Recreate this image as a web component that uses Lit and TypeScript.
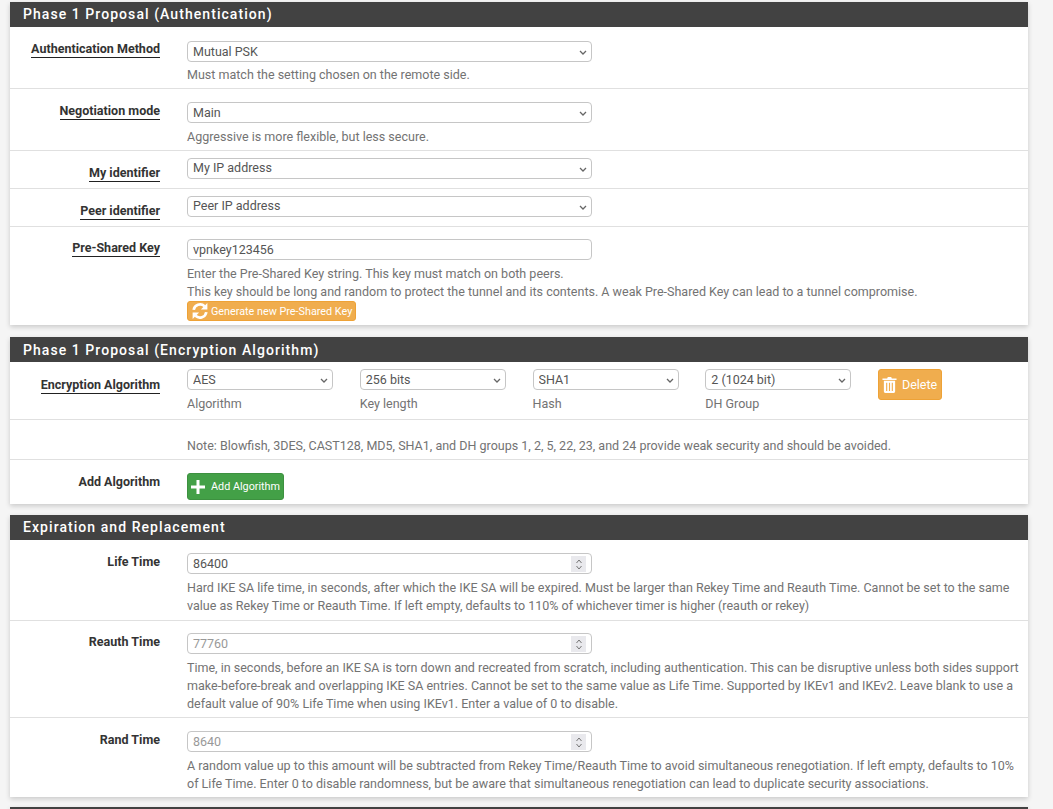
import { LitElement, html, css } from 'lit';
import { customElement } from 'lit/decorators.js';

const refreshIcon = html`<svg class="icon" viewBox="0 0 20 20" width="18" height="18">
  <path d="M3 8.800A7.200 7.200 0 0 1 15 4.600" fill="none" stroke="#fff" stroke-width="3" />
  <path d="M18.200 1.200v7.200h-7.200z" fill="#fff" />
  <path d="M17 11.200A7.200 7.200 0 0 1 5 15.400" fill="none" stroke="#fff" stroke-width="3" />
  <path d="M1.800 18.800v-7.200h7.200z" fill="#fff" />
</svg>`;

const trashIcon = html`<svg class="icon" viewBox="0 0 16 18" width="15" height="17">
  <path d="M5.500 2.600 6.200 1h3.600l.7 1.600H15.500v1.600H.5V2.600z" fill="#fff" />
  <path fill-rule="evenodd" fill="#fff" d="M2 5h12v11.200c0 1-.6 1.800-1.500 1.800h-9C2.600 18 2 17.200 2 16.200zM4.400 7v9h1.200V7zM7.400 7v9h1.200V7zM10.400 7v9h1.200V7z" />
</svg>`;

const plusIcon = html`<svg class="icon" viewBox="0 0 14 14" width="14" height="14">
  <path d="M5.500 0h3v5.500H14v3H8.500V14h-3V8.500H0v-3h5.500z" fill="#fff" />
</svg>`;

// native arrow is too heavy, so the select gets its own chevron on top
const selectBox = (text: string, cls = '') => html`<div class="select-box ${cls}">
  <select><option>${text}</option></select>
  <svg class="chevron" viewBox="0 0 8 5" width="8" height="5">
    <path d="M1 1l3 3 3-3" fill="none" stroke="#666" stroke-width="1.300" />
  </svg>
</div>`;

const numberBox = (value: string, placeholder = '') => html`<div class="number-box">
  <input type="number" .value=${value} placeholder=${placeholder} />
  <span class="spin">
    <svg viewBox="0 0 8 13" width="8" height="13">
      <path d="M1.500 5l2.500-3 2.500 3M1.500 8l2.500 3 2.500-3" fill="none" stroke="#757575" stroke-width="1" />
    </svg>
  </span>
</div>`;

@customElement('app-root')
export class AppRoot extends LitElement {
  static styles = css`
    :host {
      display: block;
      height: 809px;
      overflow: hidden;
      background: #f5f5f5;
      font-family: Roboto, 'Liberation Sans', sans-serif;
      font-size: 12.52px;
      color: #212121;
    }
    .page {
      padding: 2px 25px 0 10px;
    }
    .panel {
      background: #fff;
      margin-bottom: 12px;
      box-shadow: 0 2px 5px rgba(0, 0, 0, 0.18);
    }
    .panel.short {
      margin-bottom: 11px;
    }
    .panel.last {
      margin-bottom: 10px;
    }
    h2 {
      margin: 0;
      height: 25px;
      padding-left: 13px;
      background: #424242;
      color: #fff;
      font-size: 14px;
      font-weight: 500;
      line-height: 25px;
      letter-spacing: 1.06px;
    }
    .panel.short h2 {
      line-height: 26px;
    }
    .row {
      display: grid;
      box-sizing: border-box;
      grid-template-columns: 150px 1fr;
      column-gap: 27px;
      border-bottom: 1px solid #e0e0e0;
    }
    .row:last-child {
      border-bottom: none;
    }
    .label {
      justify-self: end;
      font-weight: 700;
      line-height: 14px;
      height: 14px;
      color: #333;
    }
    .label.link {
      height: 15px;
      border-bottom: 1px solid #212121;
    }
    .select-box,
    .number-box {
      position: relative;
      width: 405px;
    }
    .chevron {
      position: absolute;
      top: 9px;
      right: 5px;
      pointer-events: none;
    }
    .spin {
      position: absolute;
      top: 3px;
      right: 6px;
      display: flex;
      align-items: center;
      justify-content: center;
      width: 15px;
      height: 16px;
      background: #e9e9ed;
    }
    select,
    input {
      display: block;
      box-sizing: border-box;
      width: 100%;
      height: 21px;
      margin: 0;
      padding: 0 0 0 5px;
      background: #fff;
      border: 1px solid #c6c6c6;
      border-radius: 4px;
      color: #555;
      font-family: inherit;
      font-size: 12.5px;
    }
    select {
      appearance: none;
    }
    .raised select {
      padding-bottom: 3px;
    }
    input[type='number'] {
      appearance: textfield;
    }
    input::placeholder {
      color: #999;
    }
    input::-webkit-inner-spin-button {
      display: none;
    }
    .help {
      color: #737373;
      line-height: 18px;
    }
    .btn {
      display: inline-flex;
      align-items: center;
      box-sizing: border-box;
      border: 1px solid transparent;
      border-radius: 3px;
      padding: 0;
      color: #fff;
      font-family: inherit;
      font-size: 10.800px;
    }
    .icon {
      flex: none;
    }
    .warn {
      background: #f0ad4e;
      border-color: #eea236;
    }
    .ok {
      background: #43a047;
      border-color: #3d9140;
    }
    .generate {
      width: 169px;
      height: 20px;
      padding-left: 3px;
      gap: 2px;
    }
    .add {
      width: 97px;
      height: 27px;
      padding-left: 3px;
      gap: 6px;
    }
    .delete {
      width: 64px;
      height: 31px;
      padding-left: 3px;
      gap: 5px;
      font-size: 12.5px;
    }
    .auth {
      height: 62px;
      padding-top: 14px;
    }
    .auth .label {
      margin-top: 1px;
    }
    .auth .help {
      margin-top: 4px;
    }
    .auth.second {
      padding-top: 13px;
    }
    .auth.second .label {
      margin-top: 2px;
    }
    .auth.second .help {
      margin-top: 5px;
    }
    .ident {
      height: 38px;
      padding-top: 7px;
    }
    .ident .label {
      margin-top: 8px;
    }
    .key {
      padding: 12px 0 4px;
    }
    .key .label {
      margin-top: 2px;
    }
    .key .help {
      margin-top: 5px;
    }
    .key .btn {
      display: flex;
    }
    .algos {
      height: 58px;
      padding-top: 7px;
    }
    .algo-row {
      display: flex;
      align-items: flex-start;
      gap: 26.750px;
    }
    .algo-row .select-box {
      width: 146px;
    }
    .algo-row .help {
      margin-top: 5px;
    }
    .algos .label {
      margin-top: 9px;
    }
    .note {
      height: 40px;
      align-items: end;
    }
    .note .help {
      padding-bottom: 4px;
    }
    .add-row {
      padding: 13px 0 4px;
    }
    .add-row .label {
      margin-top: 2px;
    }
    .life {
      padding-top: 13px;
      padding-bottom: 5px;
    }
    .life .help {
      margin-top: 5px;
      max-width: 834px;
    }
    .life .label {
      margin-top: 2px;
    }
    .reauth {
      padding-top: 12px;
      padding-bottom: 4px;
    }
    .rand {
      padding-top: 13px;
      padding-bottom: 4px;
    }
  `;

  render() {
    return html`
      <div class="page">
        <section class="panel">
          <h2>Phase 1 Proposal (Authentication)</h2>
          <div class="row auth">
            <span class="label link">Authentication Method</span>
            <div>
              ${selectBox('Mutual PSK')}
              <div class="help">Must match the setting chosen on the remote side.</div>
            </div>
          </div>
          <div class="row auth second">
            <span class="label link">Negotiation mode</span>
            <div>
              ${selectBox('Main')}
              <div class="help">Aggressive is more flexible, but less secure.</div>
            </div>
          </div>
          <div class="row ident">
            <span class="label link">My identifier</span>
            ${selectBox('My IP address', 'raised')}
          </div>
          <div class="row ident">
            <span class="label link">Peer identifier</span>
            ${selectBox('Peer IP address', 'raised')}
          </div>
          <div class="row key">
            <span class="label link">Pre-Shared Key</span>
            <div>
              <div class="number-box"><input type="text" .value=${'vpnkey123456'} /></div>
              <div class="help">
                Enter the Pre-Shared Key string. This key must match on both peers.<br />
                This key should be long and random to protect the tunnel and its contents. A weak Pre-Shared Key can lead to a tunnel compromise.
              </div>
              <button class="btn warn generate">${refreshIcon}Generate new Pre-Shared Key</button>
            </div>
          </div>
        </section>

        <section class="panel short">
          <h2>Phase 1 Proposal (Encryption Algorithm)</h2>
          <div class="row algos">
            <span class="label link">Encryption Algorithm</span>
            <div class="algo-row">
              <div>${selectBox('AES')}<div class="help">Algorithm</div></div>
              <div>${selectBox('256 bits')}<div class="help">Key length</div></div>
              <div>${selectBox('SHA1')}<div class="help">Hash</div></div>
              <div>${selectBox('2 (1024 bit)')}<div class="help">DH Group</div></div>
              <button class="btn warn delete">${trashIcon}Delete</button>
            </div>
          </div>
          <div class="row note">
            <span></span>
            <div class="help">Note: Blowfish, 3DES, CAST128, MD5, SHA1, and DH groups 1, 2, 5, 22, 23, and 24 provide weak security and should be avoided.</div>
          </div>
          <div class="row add-row">
            <span class="label">Add Algorithm</span>
            <div><button class="btn ok add">${plusIcon}Add Algorithm</button></div>
          </div>
        </section>

        <section class="panel last">
          <h2>Expiration and Replacement</h2>
          <div class="row life">
            <span class="label">Life Time</span>
            <div>
              ${numberBox('86400')}
              <div class="help">Hard IKE SA life time, in seconds, after which the IKE SA will be expired. Must be larger than Rekey Time and Reauth Time. Cannot be set to the same value as Rekey Time or Reauth Time. If left empty, defaults to 110% of whichever timer is higher (reauth or rekey)</div>
            </div>
          </div>
          <div class="row life reauth">
            <span class="label">Reauth Time</span>
            <div>
              ${numberBox('', '77760')}
              <div class="help">Time, in seconds, before an IKE SA is torn down and recreated from scratch, including authentication. This can be disruptive unless both sides support make-before-break and overlapping IKE SA entries. Cannot be set to the same value as Life Time. Supported by IKEv1 and IKEv2. Leave blank to use a default value of 90% Life Time when using IKEv1. Enter a value of 0 to disable.</div>
            </div>
          </div>
          <div class="row life rand">
            <span class="label">Rand Time</span>
            <div>
              ${numberBox('', '8640')}
              <div class="help">A random value up to this amount will be subtracted from Rekey Time/Reauth Time to avoid simultaneous renegotiation. If left empty, defaults to 10% of Life Time. Enter 0 to disable randomness, but be aware that simultaneous renegotiation can lead to duplicate security associations.</div>
            </div>
          </div>
        </section>

        <section class="panel"><h2></h2></section>
      </div>
    `;
  }
}
